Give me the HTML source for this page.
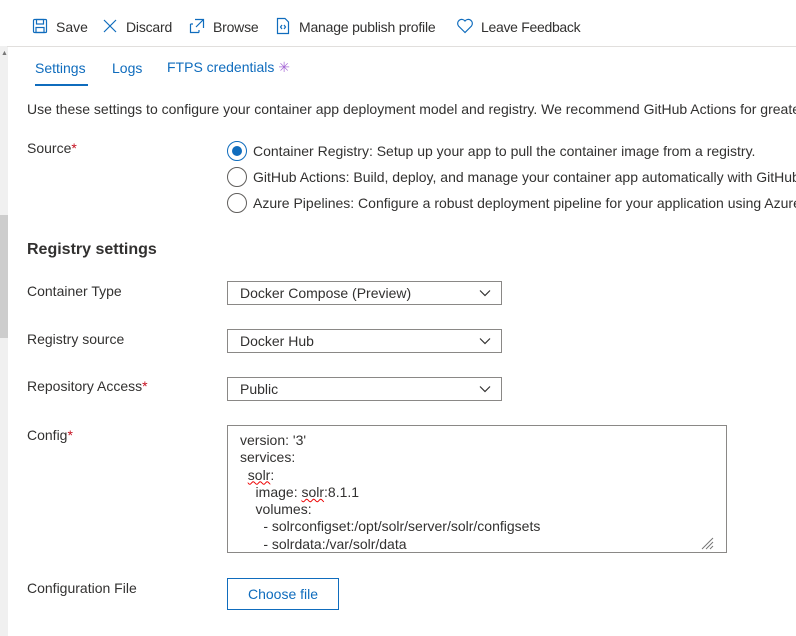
<!DOCTYPE html>
<html><head><meta charset="utf-8"><style>
*{margin:0;padding:0;box-sizing:border-box}
body{width:796px;height:636px;overflow:hidden;background:#fff;font-family:"Liberation Sans",sans-serif;font-size:14px;color:#323130;position:relative}
.a{position:absolute;white-space:nowrap}
.req{color:#c50f1f}
.dd{position:absolute;left:227px;width:275px;height:24px;border:1px solid #8a8886;padding:4px 12px;font-size:14px;line-height:15px}
.dd svg{position:absolute;right:10px;top:7px}
.rad{position:absolute;left:227px;width:20px;height:20px;border:1px solid #605e5c;border-radius:50%}
.rad.on{border-color:#0f6cbd}
.rad.on::after{content:"";position:absolute;left:4px;top:4px;width:10px;height:10px;border-radius:50%;background:#0f6cbd}
.sq{text-decoration:underline wavy #e00;text-decoration-thickness:1px}
</style></head><body>
<div class="a" style="left:0;top:46px;width:8px;height:590px;background:#f0f0f0"></div>
<div class="a" style="left:0;top:215px;width:8px;height:123px;background:#cdcdcd"></div>
<div class="a" style="left:1px;top:50px;font-size:7px;color:#777">▲</div>
<svg class="a" style="left:32px;top:18px" width="16" height="16" viewBox="0 0 16 16" fill="none" stroke="#0f6cbd" stroke-width="1.2"><rect x="1.5" y="1.5" width="13" height="13" rx="1"/><rect x="4.5" y="1.5" width="7" height="4.5"/><rect x="4" y="9.5" width="8" height="5"/></svg>
<div class="a" style="left:56px;top:19px;font-size:14px">Save</div>
<svg class="a" style="left:103px;top:19px" width="14" height="14" viewBox="0 0 14 14" stroke="#0f6cbd" stroke-width="1.2"><path d="M1 1L13 13M13 1L1 13"/></svg>
<div class="a" style="left:126px;top:19px;font-size:14px;letter-spacing:-0.2px">Discard</div>
<svg class="a" style="left:189px;top:18px" width="16" height="16" viewBox="0 0 16 16" fill="none" stroke="#0f6cbd" stroke-width="1.2"><path d="M6 1.5H14.5V10M14.5 1.5L7 9M10 14.5H1.5V6"/><path d="M1.5 6H4M10 14.5V12"/></svg>
<div class="a" style="left:213px;top:19px;font-size:14px;letter-spacing:-0.2px">Browse</div>
<svg class="a" style="left:276px;top:17px" width="14" height="18" viewBox="0 0 14 18" fill="none" stroke="#0f6cbd" stroke-width="1.2"><path d="M1.5 1.5H9L12.5 5V16.5H1.5Z"/><path d="M6 8L4.5 10L6 12M8 8L9.5 10L8 12"/></svg>
<div class="a" style="left:299px;top:19px;font-size:14px;letter-spacing:-0.2px">Manage publish profile</div>
<svg class="a" style="left:456px;top:18px" width="18" height="16" viewBox="0 0 18 16" fill="none" stroke="#0f6cbd" stroke-width="1.2"><path d="M9 14.5L2.5 8A3.8 3.8 0 0 1 9 3A3.8 3.8 0 0 1 15.5 8Z"/></svg>
<div class="a" style="left:481px;top:19px;font-size:14px;letter-spacing:-0.3px">Leave Feedback</div>
<div class="a" style="left:7px;top:46px;width:789px;height:1px;background:#e1dfdd"></div>
<div class="a" style="left:35px;top:60px;font-size:14px;color:#0f6cbd">Settings</div>
<div class="a" style="left:35px;top:84px;width:53px;height:2px;background:#0f6cbd"></div>
<div class="a" style="left:112px;top:60px;font-size:14px;color:#0f6cbd">Logs</div>
<div class="a" style="left:167px;top:59px;font-size:14px;color:#0f6cbd">FTPS credentials <span style="color:#a66ad6">✳</span></div>
<div class="a" style="left:27px;top:101px">Use these settings to configure your container app deployment model and registry. We recommend GitHub Actions for greater</div>
<div class="a" style="left:27px;top:140px">Source<span class="req">*</span></div>
<div class="rad on" style="top:141px"></div>
<div class="a" style="left:253px;top:143px">Container Registry: Setup up your app to pull the container image from a registry.</div>
<div class="rad" style="top:167px"></div>
<div class="a" style="left:253px;top:169px">GitHub Actions: Build, deploy, and manage your container app automatically with GitHub</div>
<div class="rad" style="top:193px"></div>
<div class="a" style="left:253px;top:195px">Azure Pipelines: Configure a robust deployment pipeline for your application using Azure</div>
<div class="a" style="left:27px;top:241px;font-size:16px;font-weight:bold">Registry settings</div>
<div class="a" style="left:27px;top:283px">Container Type</div>
<div class="dd" style="top:281px">Docker Compose (Preview)<svg width="12" height="8" viewBox="0 0 12 8" fill="none" stroke="#323130" stroke-width="1.2"><path d="M1 1.5L6 6.5L11 1.5"/></svg></div>
<div class="a" style="left:27px;top:331px">Registry source</div>
<div class="dd" style="top:329px">Docker Hub<svg width="12" height="8" viewBox="0 0 12 8" fill="none" stroke="#323130" stroke-width="1.2"><path d="M1 1.5L6 6.5L11 1.5"/></svg></div>
<div class="a" style="left:27px;top:378px">Repository Access<span class="req">*</span></div>
<div class="dd" style="top:377px">Public<svg width="12" height="8" viewBox="0 0 12 8" fill="none" stroke="#323130" stroke-width="1.2"><path d="M1 1.5L6 6.5L11 1.5"/></svg></div>
<div class="a" style="left:27px;top:427px">Config<span class="req">*</span></div>
<div class="a" style="left:227px;top:425px;width:500px;height:128px;border:1px solid #8a8886"></div>
<div class="a" style="left:240px;top:432px;line-height:17.3px;font-size:14px">version: '3'<br>services:<br>&nbsp;&nbsp;<span class="sq">solr</span>:<br>&nbsp;&nbsp;&nbsp;&nbsp;image: <span class="sq">solr</span>:8.1.1<br>&nbsp;&nbsp;&nbsp;&nbsp;volumes:<br>&nbsp;&nbsp;&nbsp;&nbsp;&nbsp;&nbsp;- solrconfigset:/opt/solr/server/solr/configsets<br>&nbsp;&nbsp;&nbsp;&nbsp;&nbsp;&nbsp;- solrdata:/var/solr/data</div>
<svg class="a" style="left:701px;top:537px" width="13" height="13" viewBox="0 0 13 13" stroke="#777" stroke-width="1"><path d="M12 1L1 12M12 5L5 12M12 9L9 12"/></svg>
<div class="a" style="left:27px;top:580px">Configuration File</div>
<div class="a" style="left:227px;top:578px;width:112px;height:32px;border:1px solid #0f6cbd;color:#0f6cbd;font-size:14px;text-align:center;line-height:30px">Choose file</div>
</body></html>
